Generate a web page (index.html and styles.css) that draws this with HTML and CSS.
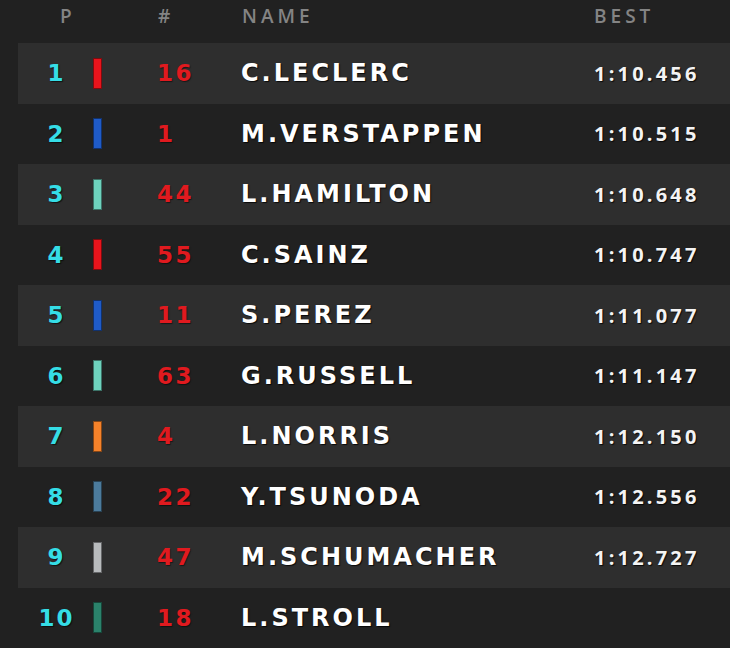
FILE: index.html
```html
<!DOCTYPE html>
<html>
<head>
<meta charset="utf-8">
<link rel="stylesheet" href="styles.css">
</head>
<body>
<div class="board">
  <div class="head">
    <span>P</span><span>#</span><span>NAME</span><span>BEST</span>
  </div>
  <div class="row alt"><span class="pos">1</span><span class="bar ferrari"></span><span class="num">16</span><span class="name">C.LECLERC</span><span class="time">1:10.456</span></div>
  <div class="row"><span class="pos">2</span><span class="bar redbull"></span><span class="num">1</span><span class="name">M.VERSTAPPEN</span><span class="time">1:10.515</span></div>
  <div class="row alt"><span class="pos">3</span><span class="bar merc"></span><span class="num">44</span><span class="name">L.HAMILTON</span><span class="time">1:10.648</span></div>
  <div class="row"><span class="pos">4</span><span class="bar ferrari"></span><span class="num">55</span><span class="name">C.SAINZ</span><span class="time">1:10.747</span></div>
  <div class="row alt"><span class="pos">5</span><span class="bar redbull"></span><span class="num">11</span><span class="name">S.PEREZ</span><span class="time">1:11.077</span></div>
  <div class="row"><span class="pos">6</span><span class="bar merc"></span><span class="num">63</span><span class="name">G.RUSSELL</span><span class="time">1:11.147</span></div>
  <div class="row alt"><span class="pos">7</span><span class="bar mclaren"></span><span class="num">4</span><span class="name">L.NORRIS</span><span class="time">1:12.150</span></div>
  <div class="row"><span class="pos">8</span><span class="bar alpha"></span><span class="num">22</span><span class="name">Y.TSUNODA</span><span class="time">1:12.556</span></div>
  <div class="row alt"><span class="pos">9</span><span class="bar haas"></span><span class="num">47</span><span class="name">M.SCHUMACHER</span><span class="time">1:12.727</span></div>
  <div class="row"><span class="pos">10</span><span class="bar aston"></span><span class="num">18</span><span class="name">L.STROLL</span><span class="time"></span></div>
</div>
</body>
</html>
```
FILE: styles.css
```css
html, body {
  margin: 0;
  padding: 0;
  background: #212121;
  overflow: hidden;
}
.board {
  width: 730px;
  height: 648px;
  background: #212121;
}
.head {
  height: 43px;
  display: grid;
  grid-template-columns: 98px 84px 352px 1fr;
  align-items: start;
  padding: 3px 0 0 60px;
  box-sizing: border-box;
  font-family: "Open Sans", "DejaVu Sans", sans-serif;
  font-weight: 600;
  font-size: 19px;
  line-height: 26px;
  letter-spacing: 4px;
  color: #848484;
}
.row {
  height: 60.5px;
  margin-left: 18px;
  display: grid;
  grid-template-columns: 75px 9px 55px 84px 353px 1fr;
  align-items: center;
  font-family: "DejaVu Sans", sans-serif;
  font-weight: bold;
}
.row.alt {
  background: #2e2e2e;
}
.pos {
  grid-column: 1;
  text-align: center;
  color: #35dde6;
  font-size: 23px;
  letter-spacing: 2px;
  text-indent: 2px;
  text-shadow: 1px 1px 1px rgba(0,0,0,0.6);
}
.bar {
  grid-column: 2;
  height: 31px;
  box-sizing: border-box;
  border: 1px solid rgba(0,0,0,0.45);
}
.num {
  grid-column: 4;
  color: #e01a1f;
  font-size: 23px;
  letter-spacing: 2.5px;
  text-shadow: 1px 1px 1px rgba(0,0,0,0.5);
}
.name {
  color: #ffffff;
  font-size: 24px;
  letter-spacing: 3px;
  text-shadow: 1px 1px 1px rgba(0,0,0,0.8);
}
.time {
  color: #f4f4f4;
  font-family: "Open Sans", "DejaVu Sans", sans-serif;
  font-weight: 700;
  font-size: 20px;
  letter-spacing: 3.2px;
  text-shadow: 1px 1px 1px rgba(0,0,0,0.8);
}
.ferrari { background: #e8141c; }
.redbull { background: #1f5bc8; }
.merc { background: #6ed2bd; }
.mclaren { background: #f5822a; }
.alpha { background: #4c7b9c; }
.haas { background: #b8bbbd; }
.aston { background: #2b826b; }
```
